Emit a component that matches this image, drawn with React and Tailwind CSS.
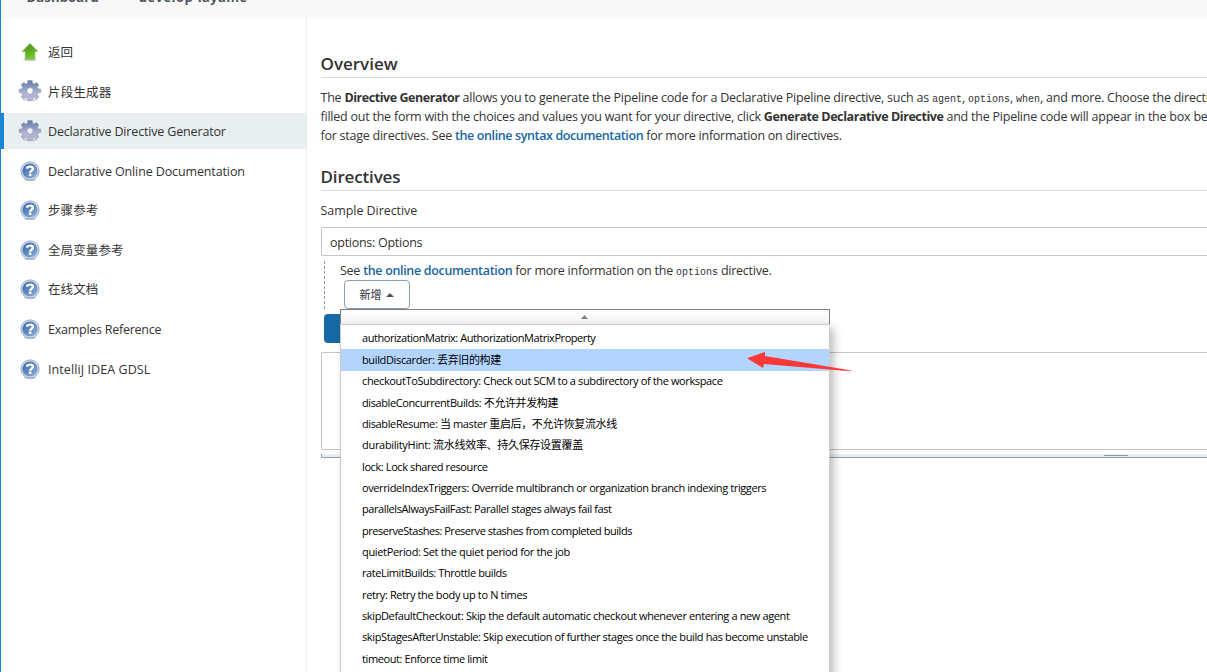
import { useState } from "react";

const sideLinks = [
    { label: "返回", icon: "up", text: "pt-[3px]" },
    { label: "片段生成器", icon: "gear", text: "pt-[3px] tracking-[0.2px]" },
    { label: "Declarative Directive Generator", icon: "gear", text: "pt-0.5 tracking-[-0.16px]" },
    { label: "Declarative Online Documentation", icon: "help", text: "pt-[3px] tracking-[-0.12px]" },
    { label: "步骤参考", icon: "help", text: "pt-0.5 tracking-[0.1px]" },
    { label: "全局变量参考", icon: "help", text: "pt-[3px] tracking-[0.1px]" },
    { label: "在线文档", icon: "help", text: "pt-0.5 tracking-[0.1px]" },
    { label: "Examples Reference", icon: "help", text: "pt-0.5 tracking-[-0.25px]" },
    { label: "IntelliJ IDEA GDSL", icon: "help", text: "pt-[3px] tracking-[0.08px]" },
];

const options = [
    { label: "authorizationMatrix: AuthorizationMatrixProperty", text: "tracking-[-0.44px]" },
    { label: "buildDiscarder: 丢弃旧的构建", text: "tracking-[-0.36px]" },
    { label: "checkoutToSubdirectory: Check out SCM to a subdirectory of the workspace", text: "tracking-[-0.38px]" },
    { label: "disableConcurrentBuilds: 不允许并发构建", text: "tracking-[-0.4px]" },
    { label: "disableResume: 当 master 重启后，不允许恢复流水线", text: "tracking-[-0.38px]" },
    { label: "durabilityHint: 流水线效率、持久保存设置覆盖", text: "tracking-[-0.3px]" },
    { label: "lock: Lock shared resource", text: "tracking-[-0.4px]" },
    { label: "overrideIndexTriggers: Override multibranch or organization branch indexing triggers", text: "tracking-[-0.39px]" },
    { label: "parallelsAlwaysFailFast: Parallel stages always fail fast", text: "tracking-[-0.41px]" },
    { label: "preserveStashes: Preserve stashes from completed builds", text: "tracking-[-0.47px]" },
    { label: "quietPeriod: Set the quiet period for the job", text: "tracking-[-0.34px]" },
    { label: "rateLimitBuilds: Throttle builds", text: "tracking-[-0.41px]" },
    { label: "retry: Retry the body up to N times", text: "tracking-[-0.35px]" },
    { label: "skipDefaultCheckout: Skip the default automatic checkout whenever entering a new agent", text: "tracking-[-0.38px]" },
    { label: "skipStagesAfterUnstable: Skip execution of further stages once the build has become unstable", text: "tracking-[-0.385px]" },
    { label: "timeout: Enforce time limit", text: "tracking-[-0.4px]" },
];

function UpIcon() {
    return (
        <svg className="shrink-0" width="24" height="24" viewBox="0 0 24 24">
            <defs>
                <linearGradient id="up" x1="0" y1="0" x2="0.3" y2="1">
                    <stop offset="0" stopColor="#4f9126" />
                    <stop offset="0.5" stopColor="#5ba524" />
                    <stop offset="1" stopColor="#74c92c" />
                </linearGradient>
            </defs>
            <ellipse cx="12" cy="19.8" rx="7" ry="1.2" fill="#000" opacity="0.2" />
            <path d="M12 3.4 L19.8 11.4 H16.8 V19.2 H7.2 V11.4 H4.2 Z" fill="url(#up)" stroke="#7cba55" strokeWidth="0.7" strokeLinejoin="round" />
        </svg>
    );
}

function GearIcon() {
    return (
        <svg className="shrink-0" width="24" height="24" viewBox="0 0 24 24">
            <defs>
                <linearGradient id="gear" x1="0.5" y1="0" x2="0.5" y2="1">
                    <stop offset="0" stopColor="#5f7ba5" />
                    <stop offset="0.4" stopColor="#929fc2" />
                    <stop offset="0.6" stopColor="#adb2d0" />
                    <stop offset="1" stopColor="#b9b6d8" />
                </linearGradient>
            </defs>
            <ellipse cx="12" cy="21" rx="7" ry="1.3" fill="#000" opacity="0.14" />
            <path
                fill="url(#gear)"
                stroke="#8791b0"
                strokeWidth="0.5"
                fillRule="evenodd"
                d="M9.8 1.5 H14.2 L14.6 4.3 L16.2 5 L18.4 3.4 L20.9 5.9 L19.3 8.2 L20 9.8 L22.8 10.2 V13.4 L20 13.9 L19.3 15.5 L20.9 17.9 L18.5 20.2 L16 18.6 L14.5 19.3 L14 21.6 H10.1 L9.6 19.3 L8 18.6 L5.5 20.2 L3.1 17.9 L4.7 15.5 L4 13.9 L1.2 13.4 V10.2 L4 9.8 L4.7 8.2 L3.1 5.9 L5.6 3.4 L7.8 5 L9.4 4.3 Z M12 8.8 A3.1 3.1 0 1 0 12 15 A3.1 3.1 0 1 0 12 8.8 Z"
            />
        </svg>
    );
}

function HelpIcon() {
    return (
        <svg className="shrink-0" width="24" height="24" viewBox="0 0 24 24">
            <defs>
                <linearGradient id="help" x1="0.1" y1="0" x2="0.9" y2="1">
                    <stop offset="0" stopColor="#3a62a2" />
                    <stop offset="0.5" stopColor="#6189c0" />
                    <stop offset="1" stopColor="#8fb2dc" />
                </linearGradient>
            </defs>
            <ellipse cx="12" cy="20.8" rx="6" ry="1.3" fill="#000" opacity="0.25" />
            <circle cx="12" cy="12" r="9.1" fill="#d3dfee" stroke="#8aa3c6" strokeWidth="0.9" />
            <circle cx="12" cy="12" r="7.6" fill="url(#help)" />
            <path d="M9 9.8 C9 6.9 15 6.9 15 9.8 C15 11.7 12.2 11.6 12.2 13.8" fill="none" stroke="#fff" strokeWidth="2.4" />
            <rect x="10.9" y="14.6" width="2.5" height="2.3" fill="#fff" />
        </svg>
    );
}

const icons = { up: UpIcon, gear: GearIcon, help: HelpIcon };

function SideLink({ link, active }) {
    const Icon = icons[link.icon];

    return (
        <a
            href="#"
            className={`flex items-center h-9 gap-1.5 whitespace-nowrap text-[12.5px] text-[#333] ${active
                ? "border-l-3 border-[#1a86d8] bg-[#e9eef0] pl-3.5"
                : "pl-[17px]"
                }`}
        >
            <Icon />
            <span className={link.text}>{link.label}</span>
        </a>
    );
}

function Code({ children }) {
    return (
        <code className="font-['Liberation_Mono',monospace] text-[10px] leading-none tracking-normal">
            {children}
        </code>
    );
}

function AddMenu({ selected, onSelect }) {
    return (
        <div className="absolute -left-1 top-[29px] z-10 w-[490px] text-[11px] text-black">
            <div className="flex h-[15px] items-center justify-center border border-b-0 border-[#808080] bg-linear-to-b from-white to-[#f3f3f3]">
                <svg width="7" height="4" viewBox="0 0 7 4">
                    <path d="M3.5 0 L7 4 H0 Z" fill="#808080" />
                </svg>
            </div>
            <ul className="border border-[#ccc] bg-white pt-[3px] pb-5 shadow-[4px_4px_8px_rgba(0,0,0,0.25)]">
                {options.map((option, i) => (
                    <li
                        key={option.label}
                        onMouseEnter={() => onSelect(i)}
                        className={`flex h-[21.37px] cursor-pointer items-center whitespace-nowrap pl-[21.5px] ${selected === i ? "bg-[#b3d4ff]" : ""}`}
                    >
                        <span className={option.text}>{option.label}</span>
                    </li>
                ))}
            </ul>

            {/* Pointer to the highlighted entry */}
            <svg className="absolute left-[407px] top-[42px]" width="108" height="22" viewBox="0 0 108 22">
                <path d="M0 7.3 L18 1 V5 L106 19.7 H97 L17 13 L16 17 Z" fill="#fb3838" />
            </svg>
        </div>
    );
}

export default function App() {
    const [selected, setSelected] = useState(1);

    return (
        <div className="flex h-[672px] w-[1207px] flex-col overflow-hidden border-l border-[#1a86d8] bg-white font-['Open_Sans','Noto_Sans_CJK_SC',sans-serif] text-[#333]">

            {/* Breadcrumbs */}
            <div className="flex h-[18px] shrink-0 gap-10 bg-[#f8f8f8] pl-[25.5px] text-[13px] leading-5 font-bold text-[#4d545d]">
                <span className="-mt-[13px] tracking-[0.18px]">Dashboard</span>
                <span className="-mt-[13px] tracking-[0.42px]">develop-layame</span>
            </div>

            <div className="flex min-h-0 grow">
                <nav className="flex w-[306px] shrink-0 flex-col gap-[3.6px] border-r border-[#e9eef0] pt-[15.8px]">
                    {sideLinks.map((link, i) => (
                        <SideLink key={link.label} link={link} active={i === 2} />
                    ))}
                </nav>

                <main className="min-w-0 grow pt-[34px] pl-[13.5px]">
                    <h2 className="h-[26px] border-b border-[#ddd] text-[17px] leading-6 font-semibold">Overview</h2>

                    <div className="mt-2.5 text-[12.5px] leading-[19px] tracking-[-0.23px] whitespace-nowrap">
                        <p className="h-[19px]">
                            The <b className="tracking-[-0.45px]">Directive Generator</b> allows you to generate the Pipeline code for a Declarative Pipeline directive, such as{" "}
                            <Code>agent</Code>, <Code>options</Code>, <Code>when</Code>, and more. Choose the directi
                        </p>
                        <p className="h-[19px]">
                            filled out the form with the choices and values you want for your directive, click{" "}
                            <b className="tracking-[-0.42px]">Generate Declarative Directive</b> and the Pipeline code will appear in the box be
                        </p>
                        <p className="h-[19px] tracking-[-0.25px]">
                            for stage directives. See{" "}
                            <a href="#" className="font-semibold tracking-[-0.38px] text-[#1867a2]">the online syntax documentation</a>{" "}
                            for more information on directives.
                        </p>
                    </div>

                    <h2 className="mt-5 h-[26px] border-b border-[#ddd] text-[17px] leading-6 font-semibold tracking-[-0.15px]">Directives</h2>

                    <p className="mt-2.5 text-[12.5px] leading-[19px] font-medium tracking-[-0.06px]">Sample Directive</p>

                    <div className="-mr-4 mt-[7px] flex h-[29px] items-center rounded-xs border border-[#c4c4c4] pt-[3px] pl-[8.5px] text-[12.5px] tracking-[-0.27px] whitespace-nowrap">
                        options: Options
                    </div>

                    <div className="ml-[3px] mt-[5px] h-12 border-l border-dashed border-[#999] pl-[15.5px]">
                        <p className="h-[19px] text-[12.5px] leading-[19px] tracking-[-0.25px] whitespace-nowrap">
                            See <a href="#" className="font-semibold tracking-[-0.33px] text-[#1867a2]">the online documentation</a> for more information on the{" "}
                            <Code>options</Code> directive.
                        </p>
                        <div className="relative ml-[3.5px] w-fit">
                            <button
                                type="button"
                                className="flex h-[29px] w-[66px] items-center justify-center gap-1 rounded-sm border border-[#8d9fa8] bg-white text-[11px] font-medium text-[#4d545d]"
                            >
                                <span className="pt-0.5">新增</span>
                                <svg className="mt-px" width="8" height="4" viewBox="0 0 8 4">
                                    <path d="M4 0 L8 4 H0 Z" fill="#4d545d" />
                                </svg>
                            </button>
                            <AddMenu selected={selected} onSelect={setSelected} />
                        </div>
                    </div>

                    <button type="button" className="ml-[3px] mt-[5px] block h-[29px] w-[200px] rounded-sm bg-[#1669a4]" />

                    <div className="-mr-4 mt-[9px] h-[98px] rounded-xs border border-[#c4c4c4]" />
                    <div className="mt-1 flex h-1 justify-end border-b border-l border-[#8fa3ae] bg-[#e9eef0] pr-[79px] pt-px">
                        <div className="h-px w-6 bg-[#909d90]" />
                    </div>
                </main>
            </div>
        </div>
    );
}
